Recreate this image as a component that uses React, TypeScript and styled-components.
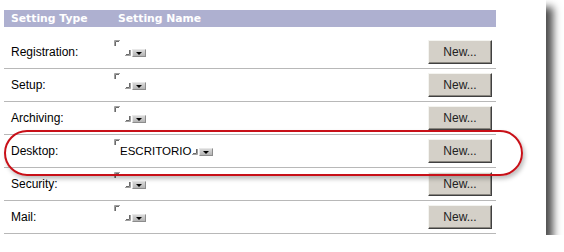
import React from "react";
import styled, { createGlobalStyle } from "styled-components";

const GlobalStyle = createGlobalStyle`
  html, body { margin: 0; padding: 0; background: #ffffff; }
  body { font-family: "Liberation Sans", Arial, sans-serif; }
`;

const Card = styled.div`
  position: relative;
  width: 546px;
  height: 235px;
  box-sizing: border-box;
  padding: 10px 0 0 4px;
  background: #ffffff;
  box-shadow: 7px 7px 8px rgba(0, 0, 0, 0.7);
`;

const Table = styled.div`
  width: 492px;
  display: flex;
  flex-direction: column;
`;

const HeaderRow = styled.div`
  display: grid;
  grid-template-columns: 110px 1fr;
  align-items: center;
  height: 17px;
  background: #aeb0d0;
  margin-bottom: 9px;
`;

const HeaderCell = styled.div<{ $pad: number }>`
  padding-left: ${(p) => p.$pad}px;
  font-family: "DejaVu Sans", Verdana, sans-serif;
  font-weight: bold;
  font-size: 10.8px;
  line-height: 17px;
  color: #ffffff;
  white-space: nowrap;
`;

const Row = styled.div`
  display: grid;
  grid-template-columns: 110px 1fr 64px;
  align-items: center;
  height: 32px;
  padding-right: 4px;
  border-bottom: 1px solid #b8b8b8;
`;

const TypeCell = styled.div`
  padding-left: 7px;
  font-family: "Liberation Sans", Arial, sans-serif;
  font-size: 12px;
  color: #000;
  white-space: nowrap;
`;

const NameCell = styled.div`
  align-self: start;
  margin-top: 4px;
  height: 19px;
  display: flex;
  align-items: flex-end;
`;

const CornerTop = styled.svg`
  align-self: flex-start;
  flex: none;
`;

const NameText = styled.span<{ $empty: boolean }>`
  font-family: "Liberation Sans", Arial, sans-serif;
  font-size: 11.5px;
  line-height: 13px;
  color: #000;
  min-width: ${(p) => (p.$empty ? 4 : 0)}px;
  white-space: nowrap;
`;

const CornerBottom = styled.svg`
  flex: none;
  margin: 0 1px 3px 1px;
`;

const DropButton = styled.span`
  flex: none;
  width: 14px;
  height: 8px;
  margin-bottom: 2px;
  box-sizing: border-box;
  display: flex;
  align-items: center;
  justify-content: center;
  background: linear-gradient(#d8d8d8, #b4b4b4);
  border: 1px solid;
  border-color: #e8e8e8 #8c8c8c #8c8c8c #e8e8e8;
`;

const Arrow = styled.span`
  width: 0;
  height: 0;
  border-left: 3px solid transparent;
  border-right: 3px solid transparent;
  border-top: 3px solid #000;
`;

const NewButton = styled.button`
  width: 64px;
  height: 24px;
  margin: 0;
  padding: 0;
  box-sizing: border-box;
  background: #d4d0c8;
  border: 1px solid;
  border-color: #f4f4f0 #404040 #404040 #f4f4f0;
  box-shadow: inset -1px -1px 0 #8a8780;
  font-family: "Liberation Sans", Arial, sans-serif;
  font-size: 12px;
  color: #222;
  cursor: pointer;
`;

const Highlight = styled.div`
  position: absolute;
  left: 4px;
  top: 130px;
  width: 519px;
  height: 46px;
  box-sizing: border-box;
  border: 2px solid #c81018;
  border-radius: 23px;
  box-shadow: 2px 3px 4px rgba(0, 0, 0, 0.25);
  pointer-events: none;
`;

const TopMark = () => (
  <CornerTop width="6" height="6" viewBox="0 0 6 6">
    <path d="M0.5 6V0.5H6" fill="none" stroke="#a0a0a0" strokeWidth="1" />
    <path d="M1.5 6V1.5H5" fill="none" stroke="#6a6a6a" strokeWidth="1" />
  </CornerTop>
);

const BottomMark = () => (
  <CornerBottom width="6" height="6" viewBox="0 0 6 6">
    <path d="M0 5.5H5.5V0" fill="none" stroke="#a0a0a0" strokeWidth="1" />
    <path d="M1 4.5H4.5V0" fill="none" stroke="#6a6a6a" strokeWidth="1" />
  </CornerBottom>
);

const rows = [
  { type: "Registration:", name: "" },
  { type: "Setup:", name: "" },
  { type: "Archiving:", name: "" },
  { type: "Desktop:", name: "ESCRITORIO" },
  { type: "Security:", name: "" },
  { type: "Mail:", name: "" },
];

export default function App() {
  return (
    <>
      <GlobalStyle />
      <Card>
        <Table>
          <HeaderRow>
            <HeaderCell $pad={7}>Setting Type</HeaderCell>
            <HeaderCell $pad={4}>Setting Name</HeaderCell>
          </HeaderRow>
          {rows.map((r) => (
            <Row key={r.type}>
              <TypeCell>{r.type}</TypeCell>
              <NameCell>
                <TopMark />
                <NameText $empty={!r.name}>{r.name}</NameText>
                <BottomMark />
                <DropButton>
                  <Arrow />
                </DropButton>
              </NameCell>
              <NewButton>New...</NewButton>
            </Row>
          ))}
        </Table>
        <Highlight />
      </Card>
    </>
  );
}
